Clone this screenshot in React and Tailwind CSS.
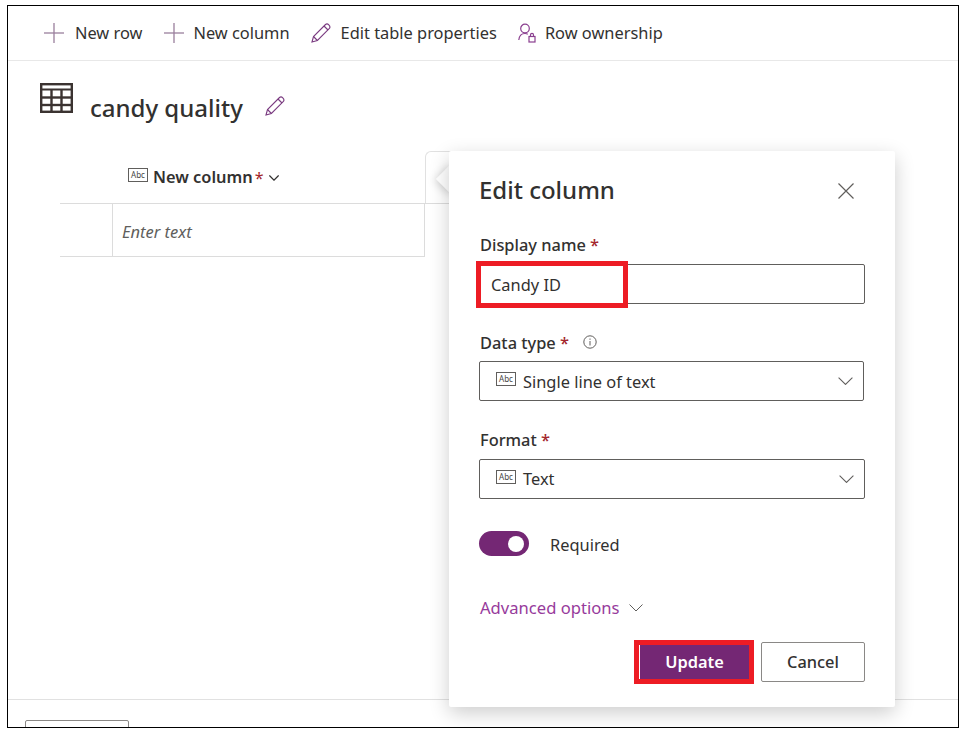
import React from 'react';

const font = { fontFamily: '"Noto Sans", "Open Sans", sans-serif' };

const Plus = () => (
    <svg width="20" height="20" viewBox="0 0 20 20" className="shrink-0">
        <path d="M0 10H20" stroke="#9a7f9c" strokeWidth="1.3" />
        <path d="M10 0V20" stroke="#9a7f9c" strokeWidth="1.3" />
    </svg>
);

const Pencil = ({ size = 20 }) => (
    <svg width={size} height={size} viewBox="0 0 20 20" fill="none" stroke="#7a3b80" strokeWidth="1.1" className="shrink-0">
        <path d="M1 19L2.5 13.5L14.5 1.5C15.5 0.6 16.6 0.6 17.8 1.8C19.2 3.2 19.2 4.4 18.4 5.4L6.4 17.5Z" />
        <path d="M2.5 13.5L6.4 17.5" />
        <path d="M13 3L17 7" />
    </svg>
);

const PersonLock = () => (
    <svg width="18" height="20" viewBox="0 0 18 20" fill="none" stroke="#8a3f8f" strokeWidth="1.2" className="shrink-0">
        <circle cx="7" cy="5.5" r="4.3" />
        <path d="M0.8 17C1.2 13 3.5 10.5 7 10.5C8 10.5 9 10.7 9.8 11.2" />
        <rect x="11" y="13.5" width="6" height="5.5" />
        <path d="M12.5 13.5V12C12.5 9.8 15.5 9.8 15.5 12V13.5" />
    </svg>
);

const TableIcon = () => (
    <svg width="33" height="30" viewBox="0 0 33 30" fill="none" stroke="#3b3331" strokeWidth="2.4" className="shrink-0">
        <rect x="1.2" y="1.2" width="30.6" height="27.6" />
        <path d="M1 6.5H32" strokeWidth="2" />
        <path d="M1 14.5H32" />
        <path d="M1 22H32" />
        <path d="M11.5 6.5V29" />
        <path d="M21.5 6.5V29" />
    </svg>
);

const Chevron = ({ w = 14, color = '#605e5c', weight = 1 }) => (
    <svg width={w} height={w / 2 + 1} viewBox="0 0 14 8" fill="none" stroke={color} strokeWidth={weight} className="shrink-0">
        <path d="M0.5 0.5L7 7L13.5 0.5" />
    </svg>
);

const Abc = () => (
    <div className="w-[20px] h-[14px] -mt-[5px] border border-[#605e5c] flex items-center justify-center text-[8px] leading-none text-[#484644] shrink-0">
        Abc
    </div>
);

const ToolbarItem = ({ icon, label, className, gap = 'ml-[10px]' }) => (
    <div className={`flex items-center ${className}`}>
        {icon}
        <span className={`text-[16.4px] text-[#323130] ${gap}`}>{label}</span>
    </div>
);

const Label = ({ children, className = '' }) => (
    <div className={`text-[16.4px] leading-[22px] font-medium text-[#323130] ${className}`}>
        {children} <span className="text-[#a4262c]">*</span>
    </div>
);

const Select = ({ label, className = '', textClass = '' }) => (
    <div className={`h-[40px] border border-[#605e5c] rounded-[2px] flex items-center pl-[16px] pr-[10px] ${className}`}>
        <Abc />
        <span className={`text-[16.4px] text-[#323130] ml-[7px] flex-1 ${textClass}`}>{label}</span>
        <Chevron w={15} />
    </div>
);

export default function App() {
    return (
        <div className="w-[964px] h-[733px] bg-white pt-[5px] pl-[7px]" style={font}>
            <div className="relative w-[952px] h-[723px] border border-black overflow-hidden flex flex-col bg-white">
                <div className="h-[55px] shrink-0 border-b border-[#e8e8e8] flex items-center pl-[36px]">
                    <ToolbarItem icon={<Plus />} label="New row" gap="ml-[11px]" />
                    <ToolbarItem icon={<Plus />} label="New column" className="ml-[22px]" gap="ml-[9px]" />
                    <ToolbarItem icon={<Pencil />} label="Edit table properties" className="ml-[21px]" />
                    <ToolbarItem icon={<PersonLock />} label="Row ownership" className="ml-[21px]" gap="ml-[9px]" />
                </div>

                <div className="flex items-start pl-[32px] pt-[22px] h-[91px] shrink-0">
                    <TableIcon />
                    <h1 className="text-[24px] leading-[32px] font-medium text-[#323130] ml-[17px] mt-[9px]">candy quality</h1>
                    <div className="ml-[22px] mt-[13px]">
                        <Pencil />
                    </div>
                </div>

                <div className="ml-[52px] w-[389px] shrink-0">
                    <div className="h-[52px] flex items-center border-b border-[#dcdcdc]">
                        <div className="w-[68px]" />
                        <Abc />
                        <span className="text-[16.4px] font-semibold text-[#323130] ml-[5px]">New column</span>
                        <span className="text-[16px] text-[#a4262c] ml-[2px]">*</span>
                        <div className="ml-[5px]">
                            <Chevron w={10} color="#323130" weight={1.8} />
                        </div>
                    </div>
                    <div className="flex h-[53px] w-[365px] border-b border-r border-[#dcdcdc]">
                        <div className="w-[53px] border-r border-[#dcdcdc]" />
                        <div className="pl-[9px] pt-[5px] flex items-center italic text-[16.5px] text-[#605e5c]">Enter text</div>
                    </div>
                </div>

                <div className="mt-auto h-[28px] border-t border-[#e1e1e1] shrink-0 pl-[17px] pt-[20px]">
                    <div className="w-[104px] h-[20px] border border-[#8a8886] rounded-[2px]" />
                </div>

                {/* tab edge behind the panel */}
                <div className="absolute left-[417px] top-[145px] w-[30px] h-[52px] border-t border-l border-[#e1e1e1] rounded-tl-[6px]" />

                {/* beak */}
                <div className="absolute left-[432px] top-[163px] w-[20px] h-[20px] rotate-45 bg-white shadow-[0_2px_8px_rgba(0,0,0,0.18)]" />

                {/* edit panel */}
                <div className="absolute left-[441px] top-[145px] w-[446px] h-[556px] bg-white rounded-[2px] shadow-[0_6px_20px_rgba(0,0,0,0.2)] pl-[31px] pr-[30px]">
                    <div className="flex items-center justify-between h-[78px] pb-[1px]">
                        <h2 className="text-[24px] font-medium text-[#323130] -ml-[1px]">Edit column</h2>
                        <svg width="16" height="16" viewBox="0 0 16 16" stroke="#605e5c" strokeWidth="1.2" className="mr-[11px] mt-[2px]">
                            <path d="M0.5 0.5L15.5 15.5M15.5 0.5L0.5 15.5" />
                        </svg>
                    </div>

                    <Label className="mt-[5px]">Display name</Label>
                    <div className="relative mt-[8px] h-[40px] border border-[#605e5c] rounded-[2px] flex items-center pl-[10px] text-[16.4px] text-[#323130]">
                        <span className="relative z-10 pt-[2px]">Candy ID</span>
                        <div className="absolute left-[-5px] top-[-4px] w-[152px] h-[47px] border-[5px] border-[#ed1c24] bg-white" />
                    </div>

                    <div className="flex items-center mt-[28px]">
                        <Label>Data type</Label>
                        <svg width="14" height="14" viewBox="0 0 14 14" fill="none" stroke="#605e5c" strokeWidth="1" className="ml-[14px] -mt-[3px]">
                            <circle cx="7" cy="7" r="6.2" />
                            <path d="M7 6V10.5M7 3.5V4.8" />
                        </svg>
                    </div>
                    <Select label="Single line of text" className="mt-[7px] -ml-[1px] mr-[1px]" textClass="pt-[3px]" />

                    <Label className="mt-[28px]">Format</Label>
                    <Select label="Text" className="mt-[8px] -ml-[1px]" />

                    <div className="flex items-center mt-[32px]">
                        <div className="relative w-[50px] h-[25px] -ml-[1px] rounded-full bg-[#742774] flex items-center justify-end pr-[5px]">
                            <div className="w-[16px] h-[16px] rounded-full bg-white" />
                        </div>
                        <span className="ml-[21px] pt-[2px] text-[16.4px] leading-[22px] text-[#323130]">Required</span>
                    </div>

                    <div className="flex items-center mt-[40px]">
                        <span className="text-[16.6px] leading-[23px] text-[#973b9c]">Advanced options</span>
                        <div className="ml-[10px]">
                            <Chevron w={14} />
                        </div>
                    </div>

                    <div className="flex justify-end items-center mt-[21px]">
                        <div className="relative flex w-[120px] h-[44px] border-[5px] border-[#ed1c24] bg-[#742774]">
                            <div className="w-[1px] bg-white" />
                            <div className="flex-1 flex items-center justify-center text-[16.4px] font-semibold text-white">Update</div>
                        </div>
                        <div className="ml-[7px] w-[104px] h-[40px] border border-[#8a8886] rounded-[2px] flex items-center justify-center text-[16.4px] font-medium text-[#323130]">
                            Cancel
                        </div>
                    </div>
                </div>
            </div>
        </div>
    );
}
